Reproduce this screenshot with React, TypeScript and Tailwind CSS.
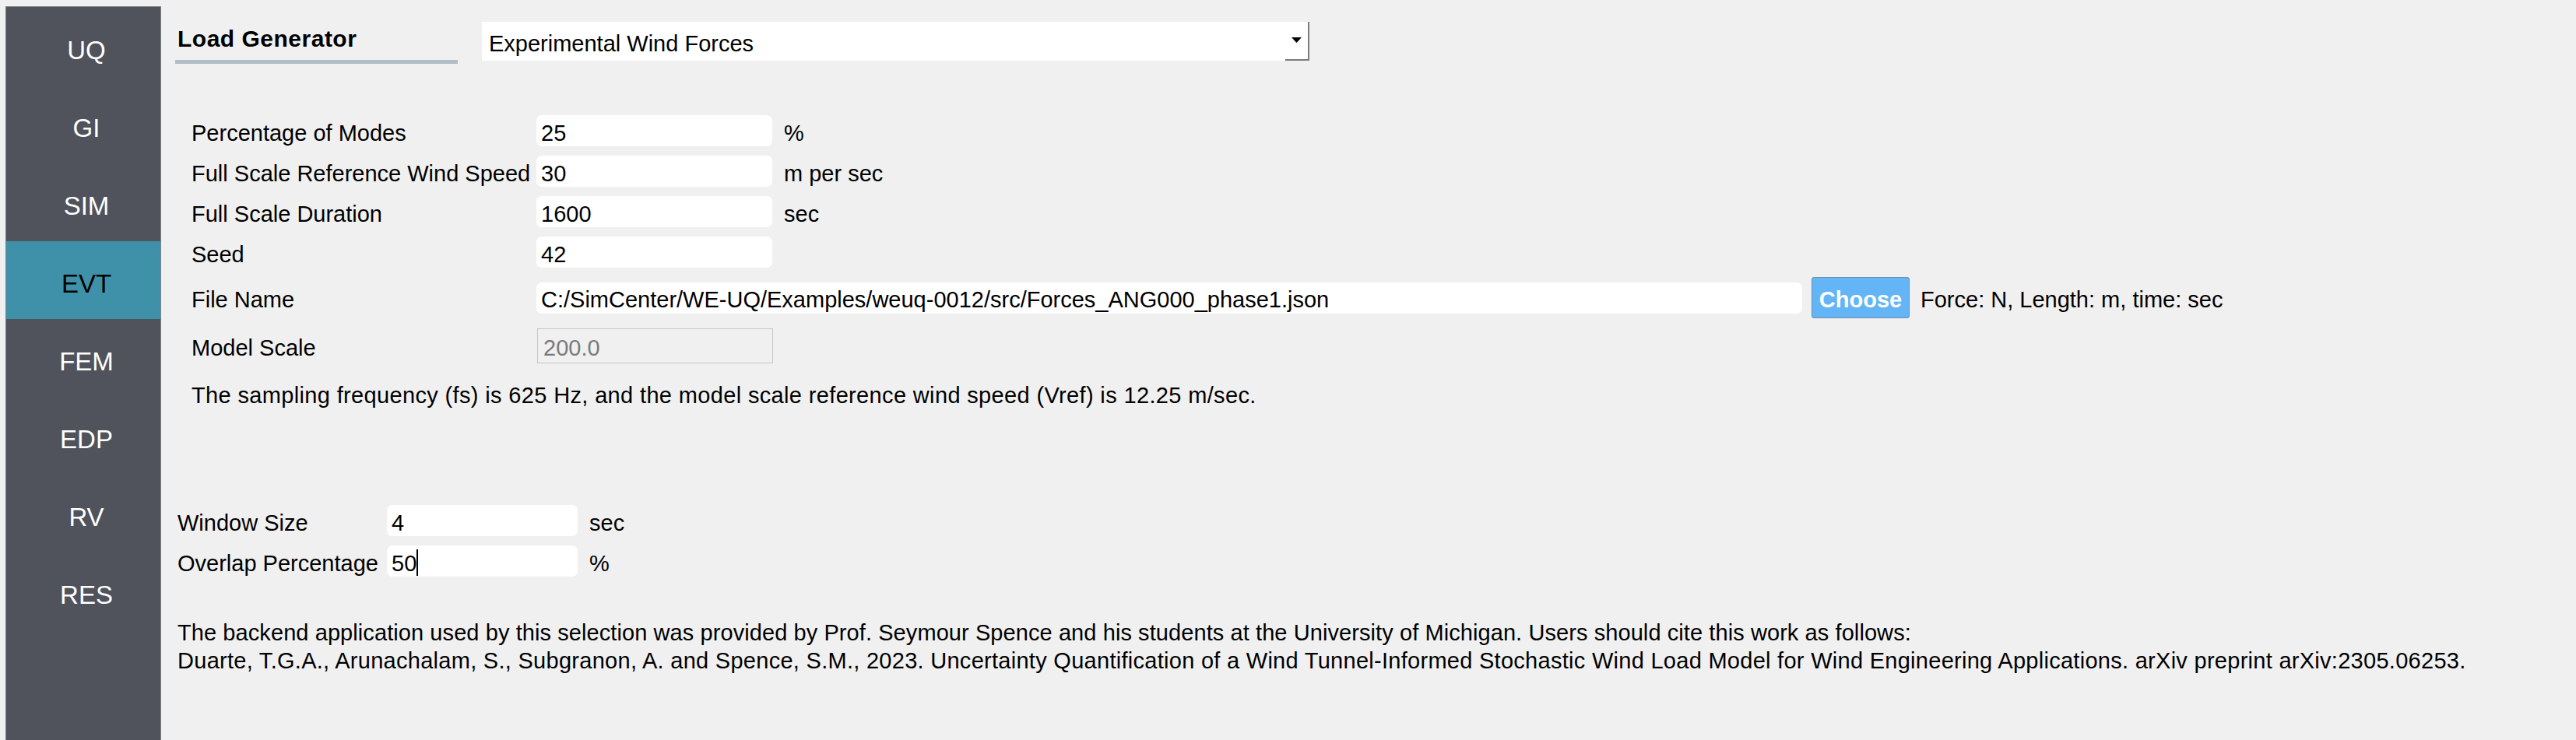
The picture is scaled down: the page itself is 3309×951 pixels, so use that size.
import { useState } from "react";

const NAV_ITEMS = ["UQ", "GI", "SIM", "EVT", "FEM", "EDP", "RV", "RES"];

const MODE_ROWS = [
  { label: "Percentage of Modes", value: "25", unit: "%" },
  { label: "Full Scale Reference Wind Speed", value: "30", unit: "m per sec" },
  { label: "Full Scale Duration", value: "1600", unit: "sec" },
  { label: "Seed", value: "42", unit: "" },
];

// text sits a few px below the widget centre, like the Qt labels
const Text = ({ children, className = "" }: { children: React.ReactNode; className?: string }) => (
  <span className={`pt-[5px] leading-[36px] whitespace-nowrap ${className}`}>{children}</span>
);

const LineEdit = ({ value, width, caret }: { value: string; width: string; caret?: boolean }) => (
  <div className={`flex h-[40px] ${width} shrink-0 items-center rounded-[7px] bg-white pl-[6px]`}>
    <Text>{value}</Text>
    {caret && <span className="mt-[4px] h-[34px] w-[2px] bg-black" />}
  </div>
);

const Sidebar = () => {
  const [active, setActive] = useState("EVT");

  return (
    <nav className="mt-[8px] ml-[7px] flex w-[200px] shrink-0 flex-col border border-b-0 border-[#80838a] bg-[#50535b] pt-px">
      {NAV_ITEMS.map((item) => (
        <button
          key={item}
          onClick={() => setActive(item)}
          className={`flex h-[100px] items-center justify-center pt-[9px] pl-[8px] text-[33px] leading-[40px] ${
            active === item ? "bg-[#3e91a8] text-black" : "text-white"
          }`}
        >
          {item}
        </button>
      ))}
    </nav>
  );
};

export default function App() {
  return (
    <div className="flex h-[951px] w-[3309px] overflow-hidden bg-[#f0f0f0] font-['Liberation_Sans',Arial,sans-serif] text-[29px] text-black">
      <Sidebar />

      <main className="ml-[18px] flex flex-1 flex-col">
        {/* header: title + generator selection */}
        <div className="mt-[28px] flex items-start">
          <div className="flex w-[363px] flex-col pt-[4px]">
            <span className="pl-[3px] text-[30px] leading-[36px] font-bold tracking-[0.5px]">Load Generator</span>
            <div className="mt-[9px] h-[5px] bg-[#b0bec5]" />
          </div>
          <div className="ml-[31px] flex h-[50px] w-[1063px] items-center justify-between bg-white pl-[9px]">
            <Text>Experimental Wind Forces</Text>
            <div className="flex h-full w-[31px] items-center justify-center border-r-2 border-b-2 border-[#7b7b7b]">
              <svg width="13" height="7" viewBox="0 0 13 7" className="-mt-[2px]">
                <polygon points="0,0 13,0 6.5,7" fill="#000" />
              </svg>
            </div>
          </div>
        </div>

        {/* wind force parameters */}
        <div className="mt-[66px] flex flex-col gap-[12px] pl-[21px]">
          {MODE_ROWS.map((row) => (
            <div key={row.label} className="flex h-[40px] items-center">
              <Text className="w-[443px] shrink-0">{row.label}</Text>
              <LineEdit value={row.value} width="w-[303px]" />
              {row.unit && <Text className="ml-[15px]">{row.unit}</Text>}
            </div>
          ))}

          <div className="flex h-[53px] items-center">
            <Text className="w-[443px] shrink-0">File Name</Text>
            <LineEdit value="C:/SimCenter/WE-UQ/Examples/weuq-0012/src/Forces_ANG000_phase1.json" width="w-[1626px]" />
            <button className="ml-[12px] flex h-[53px] w-[126px] items-center justify-center rounded-[3px] border border-[#6d8fab] bg-[#64b5f6] text-[29px] font-bold text-white">
              <span className="pt-[4px] leading-[36px]">Choose</span>
            </button>
            <Text className="ml-[14px]">Force: N, Length: m, time: sec</Text>
          </div>

          <div className="mt-px flex h-[45px] items-center">
            <Text className="w-[444px] shrink-0">Model Scale</Text>
            <div className="flex h-[45px] w-[303px] items-center border border-[#c6c6c6] bg-[#f0f0f0] pl-[7px] text-[#7a7a7a]">
              <Text>200.0</Text>
            </div>
          </div>

          <div className="mt-[6px] flex">
            <Text className="tracking-[0.35px]">
              The sampling frequency (fs) is 625 Hz, and the model scale reference wind speed (Vref) is 12.25 m/sec.
            </Text>
          </div>
        </div>

        {/* window settings */}
        <div className="mt-[123px] flex flex-col gap-[12px] pl-[3px]">
          <div className="flex h-[40px] items-center">
            <Text className="w-[269px] shrink-0">Window Size</Text>
            <LineEdit value="4" width="w-[245px]" />
            <Text className="ml-[15px]">sec</Text>
          </div>
          <div className="flex h-[40px] items-center">
            <Text className="w-[269px] shrink-0">Overlap Percentage</Text>
            <LineEdit value="50" width="w-[245px]" caret />
            <Text className="ml-[15px]">%</Text>
          </div>
        </div>

        {/* citation */}
        <div className="mt-[54px] flex flex-col pl-[3px] leading-[36px]">
          <span className="whitespace-nowrap tracking-[0.08px]">
            The backend application used by this selection was provided by Prof. Seymour Spence and his students at the University of Michigan. Users should cite this work as follows:
          </span>
          <span className="whitespace-nowrap tracking-[0.28px]">
            Duarte, T.G.A., Arunachalam, S., Subgranon, A. and Spence, S.M., 2023. Uncertainty Quantification of a Wind Tunnel-Informed Stochastic Wind Load Model for Wind Engineering Applications. arXiv preprint arXiv:2305.06253.
          </span>
        </div>
      </main>
    </div>
  );
}
